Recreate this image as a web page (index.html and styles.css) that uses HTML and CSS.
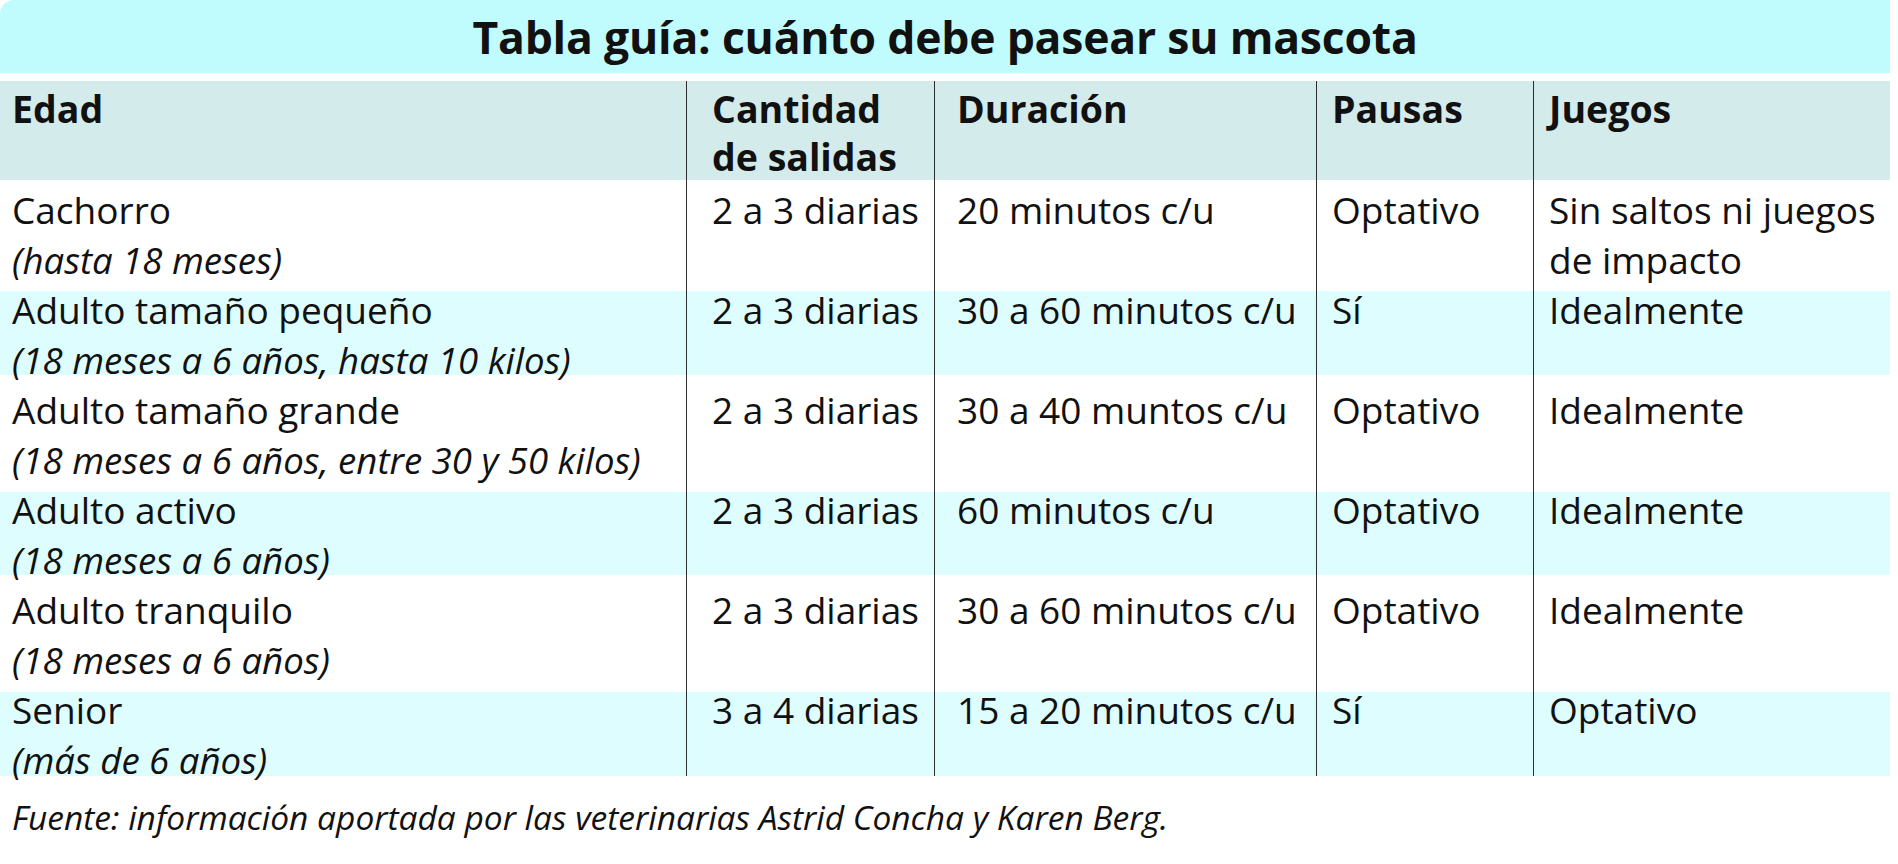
FILE: index.html
```html
<!DOCTYPE html>
<html lang="es">
<head>
<meta charset="utf-8">
<title>Tabla guía: cuánto debe pasear su mascota</title>
<link rel="stylesheet" href="styles.css">
</head>
<body>
<div class="sheet">
  <h1 class="title">Tabla guía: cuánto debe pasear su mascota</h1>
  <div class="table">
    <div class="row head">
      <div class="cell c1">Edad</div>
      <div class="cell c2">Cantidad<br>de salidas</div>
      <div class="cell c3">Duración</div>
      <div class="cell c4">Pausas</div>
      <div class="cell c5">Juegos</div>
    </div>
    <div class="row plain">
      <div class="cell c1"><span class="main">Cachorro</span><span class="sub">(hasta 18 meses)</span></div>
      <div class="cell c2">2 a 3 diarias</div>
      <div class="cell c3">20 minutos c/u</div>
      <div class="cell c4">Optativo</div>
      <div class="cell c5">Sin saltos ni juegos<br>de impacto</div>
    </div>
    <div class="row tint">
      <div class="cell c1"><span class="main">Adulto tamaño pequeño</span><span class="sub">(18 meses a 6 años, hasta 10 kilos)</span></div>
      <div class="cell c2">2 a 3 diarias</div>
      <div class="cell c3">30 a 60 minutos c/u</div>
      <div class="cell c4">Sí</div>
      <div class="cell c5">Idealmente</div>
    </div>
    <div class="row plain">
      <div class="cell c1"><span class="main">Adulto tamaño grande</span><span class="sub">(18 meses a 6 años, entre 30 y 50 kilos)</span></div>
      <div class="cell c2">2 a 3 diarias</div>
      <div class="cell c3">30 a 40 muntos c/u</div>
      <div class="cell c4">Optativo</div>
      <div class="cell c5">Idealmente</div>
    </div>
    <div class="row tint">
      <div class="cell c1"><span class="main">Adulto activo</span><span class="sub">(18 meses a 6 años)</span></div>
      <div class="cell c2">2 a 3 diarias</div>
      <div class="cell c3">60 minutos c/u</div>
      <div class="cell c4">Optativo</div>
      <div class="cell c5">Idealmente</div>
    </div>
    <div class="row plain">
      <div class="cell c1"><span class="main">Adulto tranquilo</span><span class="sub">(18 meses a 6 años)</span></div>
      <div class="cell c2">2 a 3 diarias</div>
      <div class="cell c3">30 a 60 minutos c/u</div>
      <div class="cell c4">Optativo</div>
      <div class="cell c5">Idealmente</div>
    </div>
    <div class="row tint last">
      <div class="cell c1"><span class="main">Senior</span><span class="sub">(más de 6 años)</span></div>
      <div class="cell c2">3 a 4 diarias</div>
      <div class="cell c3">15 a 20 minutos c/u</div>
      <div class="cell c4">Sí</div>
      <div class="cell c5">Optativo</div>
    </div>
  </div>
  <p class="source">Fuente: información aportada por las veterinarias Astrid Concha y Karen Berg.</p>
</div>
</body>
</html>
```

FILE: styles.css
```css
html, body {
  margin: 0;
  padding: 0;
  background: #ffffff;
}

body {
  font-family: "Open Sans", "Noto Sans", sans-serif;
  color: #111111;
}

.sheet {
  width: 1890px;
}

.title {
  margin: 0;
  height: 73px;
  padding-top: 1px;
  box-sizing: border-box;
  background: #c0fbfd;
  border-top-left-radius: 14px;
  font-size: 44.5px;
  font-weight: 700;
  line-height: 72px;
  text-align: center;
  letter-spacing: -0.2px;
}

.table {
  margin-top: 8px;
}

.row {
  display: grid;
  grid-template-columns: 686px 248px 382px 217px 357px;
  grid-template-rows: minmax(0, 1fr);
  height: 100px;
}

.row.head {
  height: 98.5px;
  background: #d4ebec;
  font-weight: 700;
  font-size: 37.5px;
  line-height: 48px;
}

.row.plain {
  background: #ffffff;
}

.row.tint {
  background: linear-gradient(to bottom,
    #ffffff 0, #ffffff 11.5px,
    #defdfe 11.5px, #defdfe 95.5px,
    #ffffff 95.5px);
}

.row.last {
  height: 96.5px;
  background: linear-gradient(to bottom,
    #ffffff 0, #ffffff 11.5px,
    #defdfe 11.5px);
}

.cell {
  white-space: nowrap;
  box-sizing: border-box;
  min-height: 0;
}

.row:not(.head) .cell {
  padding-top: 5px;
  font-size: 37px;
  line-height: 50px;
}

.row.head .cell {
  padding-top: 4px;
}

.c1 {
  padding-left: 12px;
}

.c2, .c3, .c4, .c5 {
  border-left: 1px solid #2e2e2e;
}

.c2 { padding-left: 25px; }
.c3 { padding-left: 22px; }
.c4 { padding-left: 15px; }
.c5 { padding-left: 15px; }

.main,
.sub {
  display: block;
}

.sub {
  font-style: italic;
  font-size: 36.6px;
}

.source {
  margin: 16px 0 0;
  padding-left: 12px;
  font-style: italic;
  font-size: 33.5px;
  line-height: 50px;
}
```
